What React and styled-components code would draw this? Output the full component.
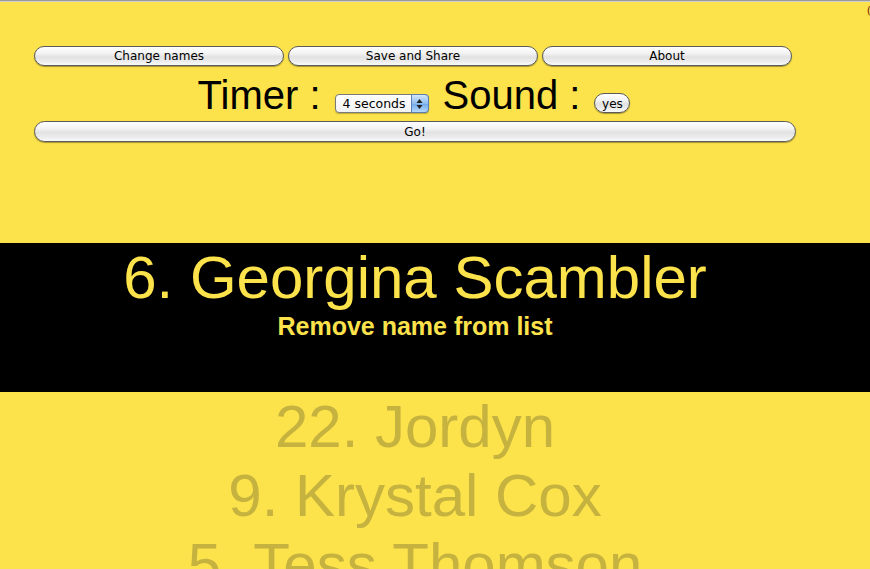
import styled, { createGlobalStyle } from "styled-components"

const GlobalStyle = createGlobalStyle`
    html, body {
        margin: 0;
        padding: 0;
        background-color: #FCE24B;
        overflow: hidden;
    }
    body {
        font-family: 'Liberation Sans', Arial, sans-serif;
    }
`

const names = ["22. Jordyn", "9. Krystal Cox", "5. Tess Thomson"]

export default function App() {
    return (
        <Page>
            <GlobalStyle />
            <Corner>(</Corner>

            <Controls>
                <ButtonRow>
                    <Button>Change names</Button>
                    <Button>Save and Share</Button>
                    <Button>About</Button>
                </ButtonRow>

                <SettingsRow>
                    <Label>Timer :</Label>
                    <Select>
                        4 seconds
                        <Arrows>
                            <svg width="7" height="12" viewBox="0 0 7 12">
                                <path d="M3.5 1 L6.5 5 L0.5 5 Z" fill="#222" />
                                <path d="M3.5 11 L6.5 7 L0.5 7 Z" fill="#222" />
                            </svg>
                        </Arrows>
                    </Select>
                    <Label>Sound :</Label>
                    <SmallButton>yes</SmallButton>
                </SettingsRow>

                <Button wide>Go!</Button>
            </Controls>

            <Current>
                <Inner>
                    <CurrentName>6. Georgina Scambler</CurrentName>
                    <RemoveLink>Remove name from list</RemoveLink>
                </Inner>
            </Current>

            <Inner>
                {names.map((n) => <QueueName key={n}>{n}</QueueName>)}
            </Inner>
        </Page>
    )
}

const Page = styled.div`
    position: relative;
    height: 100vh;
    overflow: hidden;
    border-top: 1px solid #9a9a9a;
    box-shadow: inset 0 1px 0 #cfcfcf;
    padding-top: 45px;
    box-sizing: border-box;
`
const Corner = styled.span`
    position: absolute;
    top: 3px;
    right: -1px;
    font-family: 'DejaVu Sans', sans-serif;
    font-size: 11px;
    color: #7a1a00;
`
const Controls = styled.div`
    margin-left: 34px;
    width: 762px;
    display: flex;
    flex-direction: column;
    gap: 4px;
    height: 197px;
`
const ButtonRow = styled.div`
    display: flex;
    gap: 4px;
`
const Button = styled.button`
    width: ${props => props.wide ? "762px" : "250px"};
    height: ${props => props.wide ? "21px" : "20px"};
    padding: 0;
    border: 1px solid #5a5a5a;
    border-radius: 11px;
    background: linear-gradient(#ffffff 0%, #f3f3f3 35%, #e2e2e2 55%, #ececec 80%, #fafafa 100%);
    box-shadow: 0 1px 1px rgba(0, 0, 0, 0.35);
    font-family: 'DejaVu Sans', sans-serif;
    font-size: 12px;
    color: #000;
`
const SettingsRow = styled.div`
    display: flex;
    align-items: baseline;
    justify-content: center;
    gap: 14px;
    height: 47px;
    padding-top: 3px;
    box-sizing: border-box;
    margin-left: -2px;
`
const Label = styled.span`
    font-size: 40px;
    color: #000;
`
const Select = styled.div`
    position: relative;
    width: 94px;
    height: 19px;
    box-sizing: border-box;
    border: 1px solid #7a7a7a;
    border-radius: 4px;
    background: linear-gradient(#ffffff, #f2f2f2);
    box-shadow: 0 1px 1px rgba(0, 0, 0, 0.25);
    font-family: 'DejaVu Sans', sans-serif;
    font-size: 12.5px;
    line-height: 17px;
    padding-left: 7px;
    color: #000;
    transform: translateY(-1px);
`
const Arrows = styled.div`
    position: absolute;
    top: -1px;
    right: -1px;
    width: 18px;
    height: 19px;
    box-sizing: border-box;
    border: 1px solid #5b7fb0;
    border-radius: 0 4px 4px 0;
    background: linear-gradient(#d3e6fa, #8fbdf0 50%, #6ea8ea 51%, #b6d8fb);
    display: flex;
    align-items: center;
    justify-content: center;
`
const SmallButton = styled.div`
    width: 36px;
    height: 20px;
    box-sizing: border-box;
    border: 1px solid #5a5a5a;
    border-radius: 10px;
    background: linear-gradient(#ffffff 0%, #f3f3f3 35%, #e2e2e2 55%, #ececec 80%, #fafafa 100%);
    box-shadow: 0 1px 1px rgba(0, 0, 0, 0.35);
    font-family: 'DejaVu Sans', sans-serif;
    font-size: 12px;
    line-height: 20px;
    text-align: center;
    color: #000;
    transform: translateY(-1px);
`
const Current = styled.div`
    background-color: #000;
    height: 149px;
    color: #FCE24B;
`
const Inner = styled.div`
    margin-left: 34px;
    width: 762px;
    text-align: center;
`
const CurrentName = styled.div`
    font-size: 60px;
`
const RemoveLink = styled.div`
    font-size: 25px;
    font-weight: bold;
`
const QueueName = styled.div`
    font-size: 60px;
    color: #C5B23F;
`
